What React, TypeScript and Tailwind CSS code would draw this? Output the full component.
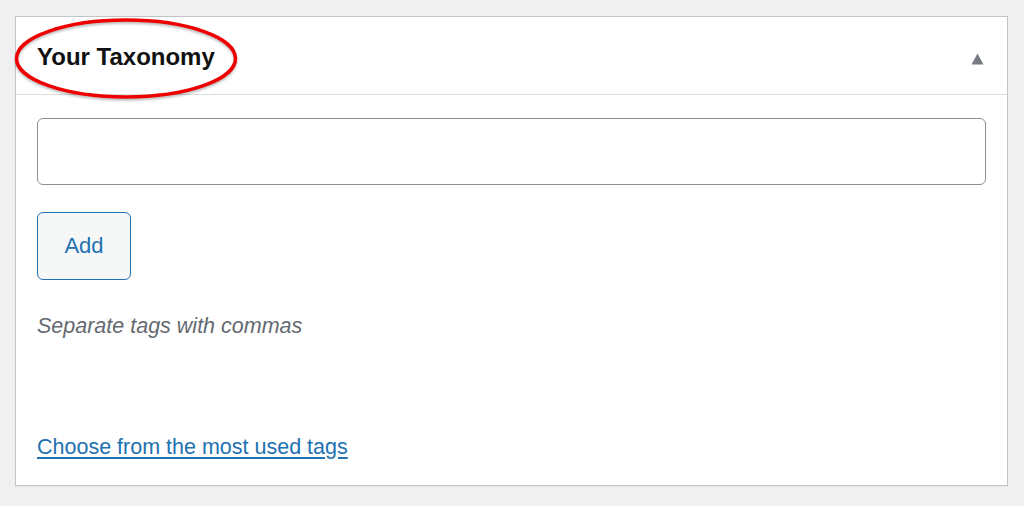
import React from 'react';

const TaxonomyBox: React.FunctionComponent = () => {
  return (
    <div className="relative w-full h-[470px] bg-white border border-[#c3c4c7] shadow-[0_1px_1px_rgba(0,0,0,0.04)] flex flex-col">
      {/* annotation circle round the title */}
      <svg
        className="absolute left-[-2px] top-[1px] pointer-events-none drop-shadow-[0_2px_1px_rgba(0,0,0,0.25)]"
        width="226"
        height="82"
        viewBox="0 0 226 82"
      >
        <ellipse cx="112" cy="40.5" rx="109.5" ry="38.5" fill="none" stroke="#ee0000" strokeWidth="3.5" />
      </svg>
      <div className="h-[78px] shrink-0 border-b border-[#dcdcde] flex items-center justify-between pl-[21px] pr-[23px]">
        <h2 className="text-[24px] leading-[32px] font-bold text-[#111] pt-[3px]">Your Taxonomy</h2>
        <svg className="mt-[7px]" width="13" height="12" viewBox="0 0 13 12">
          <path d="M6.5 0.5 L12.5 11.5 L0.5 11.5 Z" fill="#787c82" />
        </svg>
      </div>
      <div className="flex flex-col items-start px-[21px] pt-[23px]">
        <input
          type="text"
          className="w-full h-[67px] rounded-[6px] border border-[#8c8f94] bg-white px-3 text-[21.5px] outline-none"
        />
        <button className="mt-[27px] w-[94px] h-[68px] rounded-[6px] border border-[#2271b1] bg-[#f6f7f7] text-[#2271b1] text-[22px] leading-[32px]">
          Add
        </button>
        <p className="mt-[30px] italic text-[#646970] text-[21.5px] leading-[32px]">Separate tags with commas</p>
        <a href="#" className="mt-[89px] text-[#2271b1] underline underline-offset-[3px] text-[21.5px] leading-[32px]">
          Choose from the most used tags
        </a>
      </div>
    </div>
  );
};

const App: React.FunctionComponent = () => {
  return (
    <div className="w-[1024px] h-[506px] bg-[#f0f0f0] pt-[16px] pl-[15px] pr-[16px] font-['Liberation_Sans',Arial,sans-serif]">
      <TaxonomyBox />
    </div>
  );
};

export default App;
